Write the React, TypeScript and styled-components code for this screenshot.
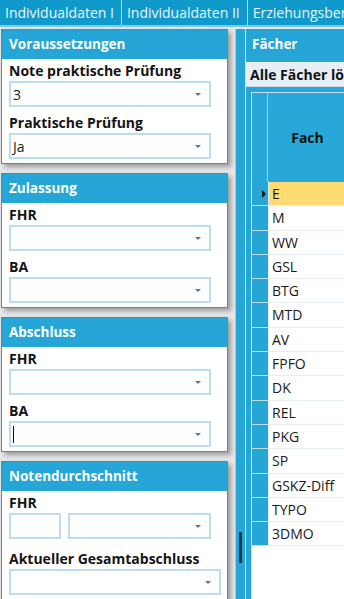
import styled, { createGlobalStyle } from 'styled-components'

const GlobalStyle = createGlobalStyle`
    html, body {
        margin: 0;
        padding: 0;
        background: #e9e9e9;
        font-family: "Open Sans", "Noto Sans", sans-serif;
        overflow: hidden;
    }
    * {
        box-sizing: border-box;
    }
`;

const Page = styled.div`
    width: 344px;
    height: 599px;
    overflow: hidden;
    display: flex;
    flex-direction: column;
`;

const TabBar = styled.div`
    height: 27px;
    flex-shrink: 0;
    display: flex;
    background: #0f9acb;
    border-bottom: 2px solid #7cc9e8;
    white-space: nowrap;
`;

const Tab = styled.div`
    padding: 0 7px 0 5px;
    line-height: 25px;
    font-size: 14px;
    color: #e9f6fb;
    border-right: 1px solid #a9dcf0;
    flex-shrink: 0;
`;

const Main = styled.div`
    flex: 1;
    display: flex;
    padding-top: 2px;
    min-height: 0;
`;

const LeftColumn = styled.div`
    width: 228px;
    flex-shrink: 0;
    padding-left: 1px;
    display: flex;
    flex-direction: column;
    gap: 9px;
`;

const Card = styled.div`
    background: #fff;
    border: 1px solid #1d9fd3;
    box-shadow: 3px 3px 5px rgba(0, 0, 0, 0.35);
    flex-shrink: 0;
`;

const CardHeader = styled.div`
    height: 29px;
    background: #25a6d7;
    color: #fff;
    font-weight: 700;
    font-size: 13.5px;
    line-height: 29px;
    padding-left: 7px;
`;

const CardBody = styled.div`
    padding: 4px 16px 4px 7px;
`;

const Label = styled.div<{ $first?: boolean; $spaced?: boolean }>`
    font-weight: 700;
    font-size: 14px;
    line-height: 16px;
    color: #141414;
    margin-top: ${p => p.$first ? '0' : p.$spaced ? '12px' : '8px'};
    margin-bottom: 2px;
    white-space: nowrap;
`;

const FieldRow = styled.div`
    display: flex;
    gap: 7px;
`;

const Select = styled.div<{ $wide?: boolean }>`
    flex: 1;
    height: 26px;
    margin-right: ${p => p.$wide ? '-10px' : '0'};
    border: 2px solid #bcdcf0;
    background: #fff;
    display: flex;
    align-items: center;
    padding: 0 8px 0 2px;
    font-size: 14px;
    color: #1a1a1a;
`;

const SelectValue = styled.span`
    flex: 1;
`;

const Caret = styled.span`
    width: 1px;
    height: 17px;
    background: #111;
`;

const Arrow = styled.span`
    width: 0;
    height: 0;
    border-left: 3px solid transparent;
    border-right: 3px solid transparent;
    border-top: 3px solid #4f78a6;
`;

const TextBox = styled.div`
    width: 52px;
    height: 26px;
    border: 2px solid #bcdcf0;
    background: #fff;
`;

const Splitter = styled.div`
    width: 11px;
    margin-left: 7px;
    flex-shrink: 0;
    background: #25a6d7;
    border-left: 1px solid #8fd0ec;
    border-right: 1px solid #bfe6f5;
    display: flex;
    flex-direction: column;
    justify-content: flex-end;
    align-items: center;
    padding-bottom: 36px;
`;

const Grip = styled.div`
    width: 3px;
    height: 31px;
    background: #183b4c;
`;

const RightPanel = styled.div`
    flex: 1;
    min-width: 0;
    background: #25a6d7;
    display: flex;
    flex-direction: column;
`;

const PanelHeader = styled.div`
    height: 31px;
    color: #fff;
    font-weight: 700;
    font-size: 13.5px;
    line-height: 30px;
    padding-left: 6px;
    flex-shrink: 0;
`;

const Toolbar = styled.div`
    height: 25px;
    margin-top: 2px;
    background: #e6eef6;
    border-top: 1px solid #f4f8fb;
    border-bottom: 1px solid #c9d9e8;
    font-weight: 700;
    font-size: 14px;
    line-height: 23px;
    padding-left: 4px;
    color: #111;
    white-space: nowrap;
    overflow: hidden;
    flex-shrink: 0;
`;

const Grid = styled.div`
    flex: 1;
    margin-top: 5px;
    margin-left: 5px;
    background: #fff;
    border-left: 1px solid #c6e2f3;
    border-top: 1px solid #c6e2f3;
    display: flex;
    flex-direction: column;
`;

const GridHeader = styled.div`
    height: 89px;
    display: flex;
    background: #28a8d8;
    flex-shrink: 0;
`;

const CornerCell = styled.div`
    width: 16px;
    border-right: 1px solid #9ad3ec;
`;

const HeaderCell = styled.div`
    flex: 1;
    display: flex;
    align-items: center;
    justify-content: center;
    font-weight: 700;
    font-size: 14px;
    color: #111;
    padding-left: 3px;
`;

const Row = styled.div`
    height: 24.3px;
    display: flex;
`;

const RowHead = styled.div`
    width: 16px;
    background: #25a6d7;
    border-bottom: 1px solid #b8e0f2;
    display: flex;
    align-items: center;
    justify-content: flex-end;
    padding-right: 2px;
`;

const Pointer = styled.span`
    width: 0;
    height: 0;
    border-top: 4px solid transparent;
    border-bottom: 4px solid transparent;
    border-left: 4px solid #111;
`;

const Cell = styled.div<{ $selected?: boolean }>`
    flex: 1;
    background: ${p => p.$selected ? '#ffdb72' : '#fff'};
    border-bottom: 1px solid #e4ecf4;
    border-left: 1px solid #e4ecf4;
    font-size: 14px;
    color: #1a1a1a;
    line-height: 23px;
    padding-left: 3px;
    white-space: nowrap;
`;

const subjects = ['E', 'M', 'WW', 'GSL', 'BTG', 'MTD', 'AV', 'FPFO', 'DK', 'REL', 'PKG', 'SP', 'GSKZ-Diff', 'TYPO', '3DMO']

const App = () => {
    return (
        <Page>
            <GlobalStyle />
            <TabBar>
                <Tab>Individualdaten I</Tab>
                <Tab>Individualdaten II</Tab>
                <Tab>Erziehungsberechtigte</Tab>
            </TabBar>
            <Main>
                <LeftColumn>
                    <Card>
                        <CardHeader>Voraussetzungen</CardHeader>
                        <CardBody>
                            <Label $first>Note praktische Prüfung</Label>
                            <Select><SelectValue>3</SelectValue><Arrow /></Select>
                            <Label>Praktische Prüfung</Label>
                            <Select><SelectValue>Ja</SelectValue><Arrow /></Select>
                        </CardBody>
                    </Card>
                    <Card>
                        <CardHeader>Zulassung</CardHeader>
                        <CardBody>
                            <Label $first>FHR</Label>
                            <Select><SelectValue /><Arrow /></Select>
                            <Label>BA</Label>
                            <Select><SelectValue /><Arrow /></Select>
                        </CardBody>
                    </Card>
                    <Card>
                        <CardHeader>Abschluss</CardHeader>
                        <CardBody>
                            <Label $first>FHR</Label>
                            <Select><SelectValue /><Arrow /></Select>
                            <Label>BA</Label>
                            <Select><Caret /><SelectValue /><Arrow /></Select>
                        </CardBody>
                    </Card>
                    <Card>
                        <CardHeader>Notendurchschnitt</CardHeader>
                        <CardBody>
                            <Label $first>FHR</Label>
                            <FieldRow>
                                <TextBox />
                                <Select><SelectValue /><Arrow /></Select>
                            </FieldRow>
                            <Label $spaced>Aktueller Gesamtabschluss</Label>
                            <Select $wide><SelectValue /><Arrow /></Select>
                        </CardBody>
                    </Card>
                </LeftColumn>
                <Splitter>
                    <Grip />
                </Splitter>
                <RightPanel>
                    <PanelHeader>Fächer</PanelHeader>
                    <Toolbar>Alle Fächer löschen</Toolbar>
                    <Grid>
                        <GridHeader>
                            <CornerCell />
                            <HeaderCell>Fach</HeaderCell>
                        </GridHeader>
                        {subjects.map((s, i) => (
                            <Row key={s}>
                                <RowHead>{i === 0 && <Pointer />}</RowHead>
                                <Cell $selected={i === 0}>{s}</Cell>
                            </Row>
                        ))}
                    </Grid>
                </RightPanel>
            </Main>
        </Page>
    )
}

export default App
